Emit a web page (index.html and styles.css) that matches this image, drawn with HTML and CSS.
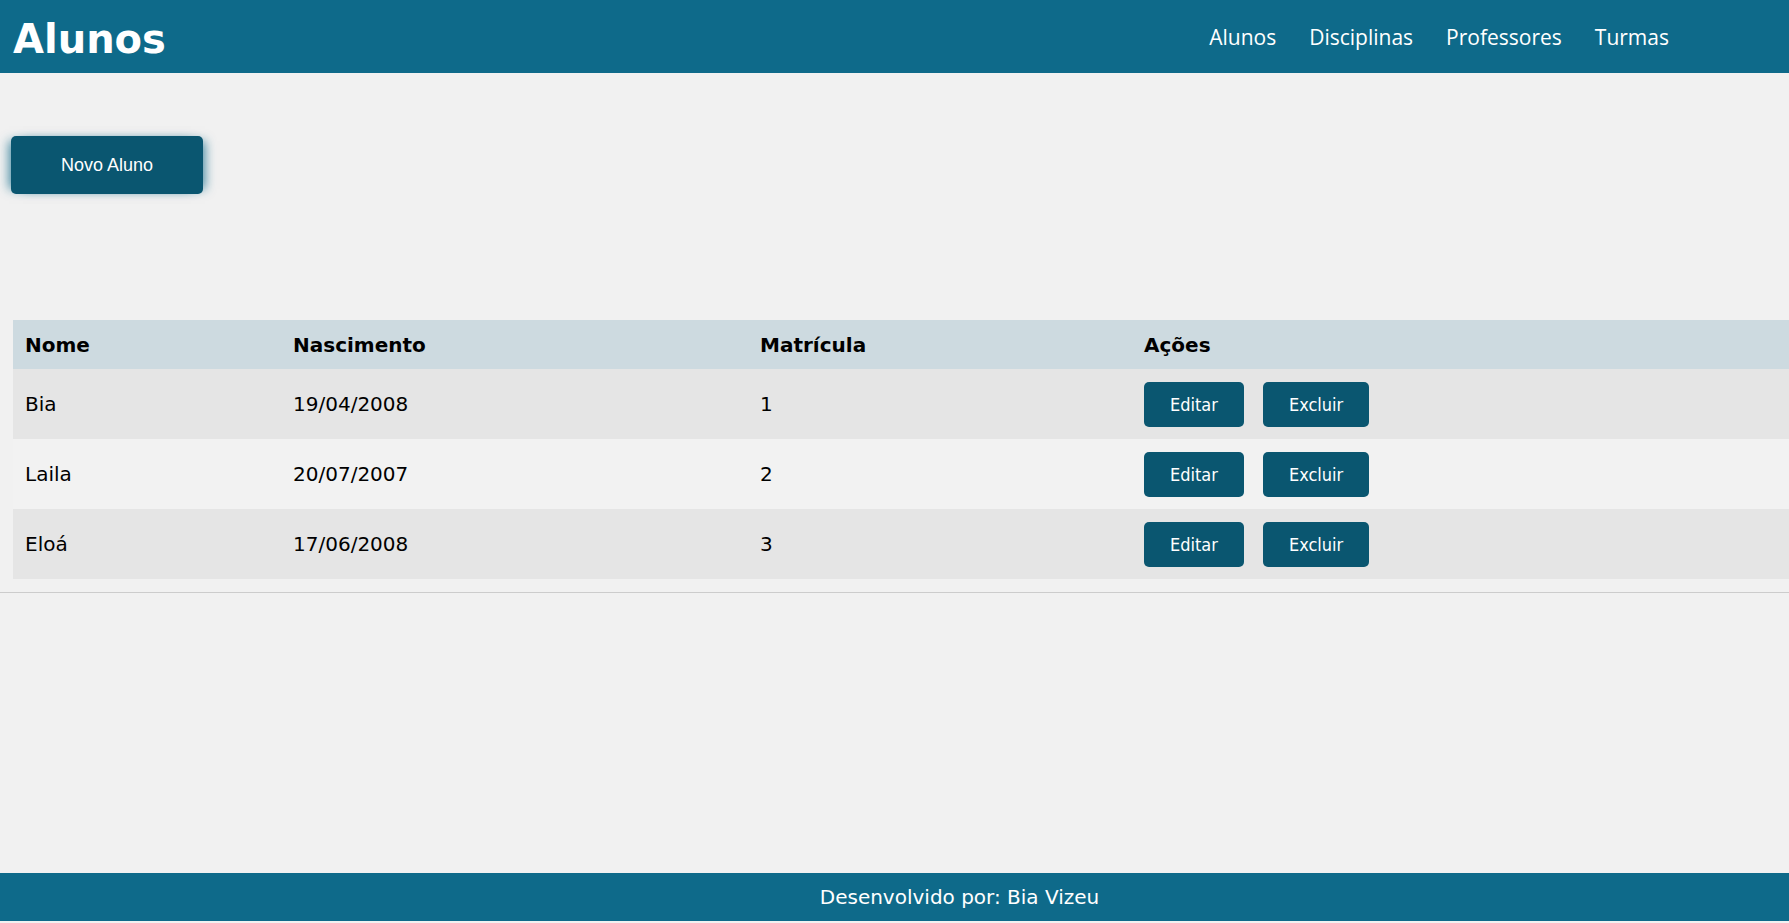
FILE: index.html
```
<!DOCTYPE html>
<html lang="pt-BR">
<head>
<meta charset="utf-8">
<title>Alunos</title>
<link rel="stylesheet" href="styles.css">
</head>
<body>
<header class="topbar">
  <h1 class="title">Alunos</h1>
  <nav class="nav">
    <a class="nav-link" href="#">Alunos</a>
    <a class="nav-link" href="#">Disciplinas</a>
    <a class="nav-link" href="#">Professores</a>
    <a class="nav-link" href="#">Turmas</a>
  </nav>
</header>
<main class="content">
  <button class="btn-new">Novo Aluno</button>
  <table class="grid">
    <colgroup>
      <col class="c-nome"><col class="c-nasc"><col class="c-mat"><col class="c-acoes">
    </colgroup>
    <thead>
      <tr class="head-row"><th>Nome</th><th>Nascimento</th><th>Matrícula</th><th>Ações</th></tr>
    </thead>
    <tbody>
      <tr class="row odd"><td>Bia</td><td>19/04/2008</td><td>1</td><td><div class="actions"><button class="btn-act">Editar</button><button class="btn-act">Excluir</button></div></td></tr>
      <tr class="row even"><td>Laila</td><td>20/07/2007</td><td>2</td><td><div class="actions"><button class="btn-act">Editar</button><button class="btn-act">Excluir</button></div></td></tr>
      <tr class="row odd"><td>Eloá</td><td>17/06/2008</td><td>3</td><td><div class="actions"><button class="btn-act">Editar</button><button class="btn-act">Excluir</button></div></td></tr>
    </tbody>
  </table>
  <hr class="divider">
</main>
<footer class="footer">Desenvolvido por: Bia Vizeu</footer>
</body>
</html>
```
FILE: styles.css
```
* { box-sizing: border-box; }
html, body { margin: 0; padding: 0; }
body {
  background: #f1f1f1;
  font-family: "DejaVu Sans", Verdana, sans-serif;
  color: #000;
  min-height: 100vh;
  display: flex;
  flex-direction: column;
  padding-bottom: 2px;
  overflow: hidden;
}
.topbar {
  height: 73px;
  background: #0e6a8a;
  display: flex;
  justify-content: space-between;
  align-items: flex-start;
  padding: 0 120px 0 13px;
}
.title {
  margin: 0;
  padding-top: 16px;
  font-family: "DejaVu Sans", Verdana, sans-serif;
  font-weight: bold;
  font-size: 40px;
  line-height: normal;
  color: #fff;
}
.nav {
  display: flex;
  gap: 33px;
  padding-top: 23px;
}
.nav-link {
  font-family: "Open Sans", "Noto Sans", sans-serif;
  font-size: 21px;
  line-height: normal;
  color: #fff;
  text-decoration: none;
}
.content {
  display: flex;
  flex-direction: column;
  align-items: flex-start;
  padding-top: 63px;
}
.btn-new {
  margin-left: 11px;
  width: 192px;
  height: 58px;
  border: none;
  border-radius: 5px;
  background: #0a5670;
  color: #fff;
  font-family: "Liberation Sans", Arial, sans-serif;
  font-size: 18px;
  box-shadow: -7px 0 10px -5px rgba(14, 106, 138, 0.75), 7px 0 10px -5px rgba(14, 106, 138, 0.75);
  cursor: pointer;
}
.grid {
  margin-top: 126px;
  margin-left: 13px;
  width: calc(100% - 13px);
  border-collapse: collapse;
  table-layout: fixed;
  font-size: 20px;
}
.c-nome { width: 268px; }
.c-nasc { width: 467px; }
.c-mat { width: 384px; }
.head-row { background: #cddae0; height: 49px; }
.head-row th {
  text-align: left;
  font-weight: bold;
  padding: 0 12px;
  vertical-align: middle;
}
.row { height: 70px; }
.row td { padding: 0 12px; vertical-align: middle; }
.odd { background: #e5e5e5; }
.even { background: #f2f2f2; }
.actions { display: flex; gap: 19px; }
.btn-act {
  height: 45px;
  padding: 0 26px;
  border: none;
  border-radius: 5px;
  background: #0a5670;
  color: #fff;
  font-family: "DejaVu Sans Condensed", "DejaVu Sans", sans-serif;
  font-stretch: condensed;
  font-size: 18px;
  cursor: pointer;
}
.divider {
  align-self: stretch;
  margin: 13px 0 0 0;
  border: none;
  border-top: 1px solid #cccccc;
  height: 0;
}
.footer {
  margin-top: auto;
  height: 48px;
  background: #0e6a8a;
  color: #fff;
  display: flex;
  align-items: center;
  justify-content: center;
  padding-left: 130px;
  font-size: 20px;
}
```
